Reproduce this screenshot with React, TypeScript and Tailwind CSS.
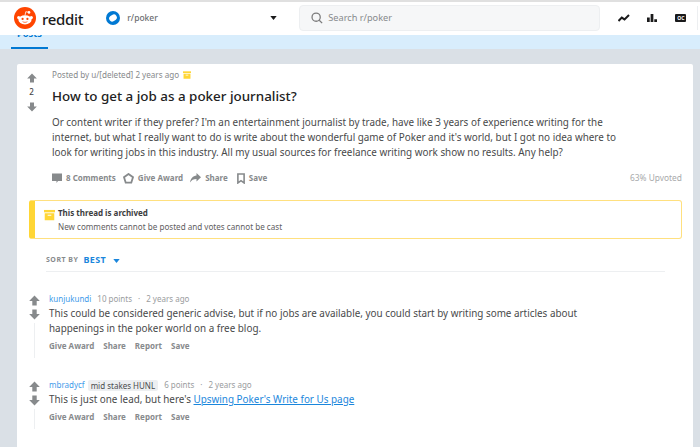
import type { ReactNode } from 'react';

const bodyFont = "font-['Noto_Sans','Open_Sans',sans-serif]";

function Arrow({ down = false, className = '' }: { down?: boolean; className?: string }) {
  return (
    <svg viewBox="0 0 12 12" className={`${className} ${down ? 'rotate-180' : ''}`} fill="#878a8c">
      <path d="M6 .5 11.8 6.6H8.4V11.5H3.6V6.6H.2Z" />
    </svg>
  );
}

function RedditLogo() {
  return (
    <svg viewBox="0 0 22 22" className="w-[22px] h-[22px]">
      <circle cx="11" cy="11" r="11" fill="#ff4500" />
      <ellipse cx="11" cy="12.8" rx="6.6" ry="4.6" fill="#fff" />
      <circle cx="4.7" cy="10.6" r="1.6" fill="#fff" />
      <circle cx="17.3" cy="10.6" r="1.6" fill="#fff" />
      <circle cx="8.6" cy="11.9" r="1.1" fill="#ff4500" />
      <circle cx="13.4" cy="11.9" r="1.1" fill="#ff4500" />
      <path d="M8.6 14.6c1.4 1 3.4 1 4.8 0" stroke="#ff4500" strokeWidth=".7" fill="none" />
      <path d="M11 8.3 11.8 4.7 14.6 5.3" stroke="#fff" strokeWidth=".8" fill="none" />
      <circle cx="15" cy="5.4" r="1.3" fill="#fff" />
    </svg>
  );
}

function ArchiveIcon({ className = '' }: { className?: string }) {
  return (
    <svg viewBox="0 0 12 12" className={className} fill="#ffd635">
      <rect x="0" y="0.5" width="12" height="2.6" />
      <path d="M.8 4H11.2V11.6H.8ZM4 5.8v1h4v-1Z" fillRule="evenodd" />
    </svg>
  );
}

function PostAction({ icon, label }: { icon: ReactNode; label: string }) {
  return (
    <div className="flex items-center gap-[4px]">
      {icon}
      <span className="text-[8px] font-bold text-[#878a8c]">{label}</span>
    </div>
  );
}

function Comment({
  author,
  flair,
  points,
  children,
  lineH,
}: {
  author: string;
  flair?: string;
  points: string;
  children: ReactNode;
  lineH: string;
}) {
  return (
    <div className="flex pl-[12px]">
      <div className="w-[11px] flex flex-col items-center shrink-0">
        <Arrow className="w-[11px] h-[11px] mt-[3px]" />
        <Arrow down className="w-[11px] h-[11px] mt-[3px]" />
        <div className={`w-[1px] bg-[#edeff1] mt-[3px] ${lineH}`} />
      </div>
      <div className="ml-[9px] min-w-0">
        <div className="flex items-center h-[14px] text-[8px] text-[#9a9c9e]">
          <span className="text-[#3f9bea]">{author}</span>
          {flair && (
            <span className="ml-[3px] bg-[#edeff1] text-[#4a4c4e] px-[3px] h-[11px] leading-[11px] rounded-[2px]">{flair}</span>
          )}
          <span className="ml-[6px]">{points}</span>
          <span className="mx-[6px]">·</span>
          <span>2 years ago</span>
        </div>
        <div className="text-[9.9px] leading-[15px] text-[#48494a] whitespace-nowrap">{children}</div>
        <div className="flex gap-[9px] mt-[4px] text-[8px] leading-[12px] font-bold text-[#878a8c]">
          <span>Give Award</span>
          <span>Share</span>
          <span>Report</span>
          <span>Save</span>
        </div>
      </div>
    </div>
  );
}

export default function App() {
  return (
    <div className={`w-[700px] h-[447px] overflow-hidden bg-[#dae0e6] border-t-2 border-[#e0e0e0] ${bodyFont}`}>
      {/* header */}
      <header className="relative z-10 h-[33px] bg-white flex items-center pb-[1px]">
        <div className="ml-[14px]">
          <RedditLogo />
        </div>
        <span className="ml-[6px] mt-[1px] text-[15px] leading-[20px] font-medium text-[#1a1a1b] tracking-[-0.3px]">reddit</span>
        <div className="ml-[23px] w-[14px] h-[14px] rounded-full bg-[#0079d3] flex items-center justify-center">
          <div className="w-[8px] h-[6px] rounded-full rotate-[-35deg] bg-white" />
        </div>
        <span className="ml-[7px] w-[33px] text-[8.5px] font-medium text-[#6b6d6f]">r/poker</span>
        <svg viewBox="0 0 8 5" className="w-[7px] h-[4px] ml-[110px]" fill="#1a1a1b">
          <path d="M0 0h8L4 5Z" />
        </svg>
        <div className="ml-[22px] w-[301px] h-[26px] rounded-[4px] bg-[#f6f7f8] border border-[#edeff1] flex items-center pl-[11px]">
          <svg viewBox="0 0 14 14" className="w-[12px] h-[12px]" fill="none" stroke="#7c7c7c" strokeWidth="1.5">
            <circle cx="6" cy="6" r="4.8" />
            <path d="M9.6 9.6 13 13" />
          </svg>
          <span className="ml-[5px] text-[9.2px] text-[#878a8c]">Search r/poker</span>
        </div>
        <svg viewBox="0 0 12 8" className="w-[12px] h-[8px] ml-[18px]" fill="none" stroke="#1a1a1b" strokeWidth="2">
          <path d="M.5 7 3.8 3.6 6.5 5.4 11 1" />
        </svg>
        <svg viewBox="0 0 11 11" className="w-[10px] h-[10px] ml-[17px]" fill="#1a1a1b">
          <path d="M0 5h3v5H0ZM4 1h3v9H4ZM8 7h3v3H8Z" />
        </svg>
        <div className="ml-[18px] w-[11px] h-[8px] rounded-[1px] bg-[#1a1a1b] text-white text-[5px] leading-[8px] font-bold text-center">OC</div>
        <div className="ml-[11px] w-[1px] h-[24px] bg-[#edeff1]" />
      </header>

      {/* tabs */}
      <div className="h-[14px] bg-[#d8edfc] overflow-hidden relative">
        <div className="ml-[11px] w-[37px] h-[14px] border-b-2 border-[#0079d3] flex items-end justify-center">
          <span className="text-[9.3px] font-bold text-[#0079d3] leading-[12px] mb-[7px]">Posts</span>
        </div>
      </div>

      {/* post card */}
      <div className="mt-[15px] ml-[17px] w-[676px] h-[400px] bg-white rounded-t-[2px]">
        <div className="flex pt-[5px]">
          <div className="w-[29px] flex flex-col items-center shrink-0">
            <Arrow className="w-[10px] h-[10px] mt-[4px]" />
            <span className="text-[8px] font-medium text-[#444546] leading-[10px] mt-[4px]">2</span>
            <Arrow down className="w-[10px] h-[10px] mt-[5px]" />
          </div>
          <div className="ml-[6px] w-[630px]">
            <div className="flex items-center h-[12px] text-[8.1px] text-[#878a8c]">
              <span>Posted by u/[deleted] 2 years ago</span>
              <ArchiveIcon className="w-[8px] h-[8px] ml-[4px]" />
            </div>
            <h1 className="mt-[5px] text-[13.4px] leading-[20px] font-medium text-[#222222]">How to get a job as a poker journalist?</h1>
            <p className="mt-[9px] text-[9.9px] leading-[15px] text-[#48494a] whitespace-nowrap">
              Or content writer if they prefer? I'm an entertainment journalist by trade, have like 3 years of experience writing for the
              <br />
              internet, but what I really want to do is write about the wonderful game of Poker and it's world, but I got no idea where to
              <br />
              look for writing jobs in this industry. All my usual sources for freelance writing work show no results. Any help?
            </p>
            <div className="flex items-center mt-[11px] h-[14px]">
              <div className="flex items-center gap-[7px]">
                <PostAction
                  icon={
                    <svg viewBox="0 0 10 10" className="w-[10px] h-[10px]" fill="#878a8c">
                      <path d="M0 .5h10v7.5H6L4.5 10V8H0Z" />
                    </svg>
                  }
                  label="8 Comments"
                />
                <PostAction
                  icon={
                    <svg viewBox="0 0 11 11" className="w-[11px] h-[11px]" fill="none" stroke="#878a8c" strokeWidth="1.8">
                      <path d="M5.5 1 10 4.2 8.3 9.6H2.7L1 4.2Z" />
                    </svg>
                  }
                  label="Give Award"
                />
                <PostAction
                  icon={
                    <svg viewBox="0 0 11 10" className="w-[11px] h-[10px]" fill="#878a8c">
                      <path d="M6.5 0 11 4.2 6.5 8.4V6C3.5 6 1.5 7 0 9.6.4 5.5 3 2.7 6.5 2.4Z" />
                    </svg>
                  }
                  label="Share"
                />
                <div className="ml-[2px]">
                  <PostAction
                    icon={
                      <svg viewBox="0 0 9 12" className="w-[8px] h-[11px]" fill="none" stroke="#878a8c" strokeWidth="1.8">
                        <path d="M1 1h7v10L4.5 8.5 1 11Z" />
                      </svg>
                    }
                    label="Save"
                  />
                </div>
              </div>
              <span className="ml-auto text-[8.4px] text-[#a8aaab]">63% Upvoted</span>
            </div>
          </div>
        </div>

        {/* archived notice */}
        <div className="mt-[15px] ml-[12px] w-[653px] h-[39px] rounded-[3px] border border-[#ffe07f] border-l-[6px] border-l-[#ffd635] flex">
          <ArchiveIcon className="w-[11px] h-[12px] ml-[9px] mt-[8px]" />
          <div className="ml-[3px] mt-[5px]">
            <div className="text-[8px] leading-[14px] font-bold text-[#3c3d3e]">This thread is archived</div>
            <div className="text-[8.1px] leading-[14px] text-[#5f6062]">New comments cannot be posted and votes cannot be cast</div>
          </div>
        </div>

        {/* sort */}
        <div className="ml-[29px] mt-[14px] w-[619px] h-[19px] border-b border-[#edeff1] flex items-start pt-[1px]">
          <span className="text-[7px] font-bold tracking-[0.5px] text-[#878a8c] leading-[12px]">SORT BY</span>
          <span className="ml-[5px] text-[9px] font-bold tracking-[0.4px] text-[#1a86dc] leading-[12px]">BEST</span>
          <svg viewBox="0 0 8 5" className="w-[7px] h-[4px] ml-[7px] mt-[5px]" fill="#1a86dc">
            <path d="M0 0h8L4 5Z" />
          </svg>
        </div>

        {/* comments */}
        <div className="mt-[20px] flex flex-col gap-[20px]">
          <Comment author="kunjukundi" points="10 points" lineH="h-[35px]">
            This could be considered generic advise, but if no jobs are available, you could start by writing some articles about
            <br />
            happenings in the poker world on a free blog.
          </Comment>
          <Comment author="mbradycf" flair="mid stakes HUNL" points="6 points" lineH="h-[20px]">
            This is just one lead, but here's <a className="text-[#1a86dc] underline">Upswing Poker's Write for Us page</a>
          </Comment>
        </div>
      </div>
    </div>
  );
}
